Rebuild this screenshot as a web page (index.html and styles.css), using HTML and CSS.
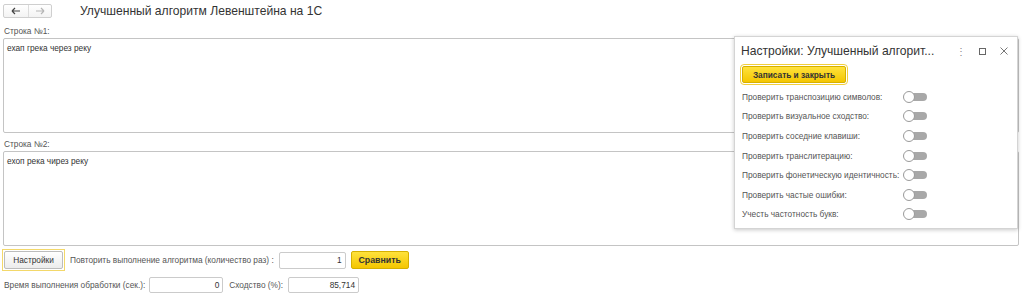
FILE: index.html
```html
<!DOCTYPE html>
<html lang="ru">
<head>
    <meta charset="UTF-8">
    <title>Левенштейн</title>
    <link rel="stylesheet" href="styles.css">
</head>
<body>
    <div class="form">
        <div class="head">
            <div class="nav">
                <span class="nav-btn">
                    <svg width="10" height="8" viewBox="0 0 10 8"><path d="M1 4h8M1 4l3-3M1 4l3 3" fill="none" stroke="#444" stroke-width="1.2"/></svg>
                </span>
                <span class="nav-btn dim">
                    <svg width="10" height="8" viewBox="0 0 10 8"><path d="M1 4h8M9 4l-3-3M9 4l-3 3" fill="none" stroke="#b5b5b5" stroke-width="1.2"/></svg>
                </span>
            </div>
            <div class="title">Улучшенный алгоритм Левенштейна на 1С</div>
        </div>

        <div class="label top">Строка №1:</div>
        <div class="area">ехап грека через реку</div>

        <div class="label top second">Строка №2:</div>
        <div class="area">ехоп река чирез реку</div>

        <div class="row r1">
            <div class="focus"><button class="btn">Настройки</button></div>
            <span class="label">Повторить выполнение алгоритма (количество раз) :</span>
            <div class="field w1">1</div>
            <button class="btn yellow">Сравнить</button>
        </div>
        <div class="row r2">
            <span class="label">Время выполнения обработки (сек.):</span>
            <div class="field w2">0</div>
            <span class="label">Сходство (%):</span>
            <div class="field w3">85,714</div>
        </div>
    </div>

    <!-- окно настроек -->
    <div class="popup">
        <div class="popup-head">
            <div class="popup-title">Настройки: Улучшенный алгорит...</div>
            <span class="ico more">&#8942;</span>
            <span class="ico sq"></span>
            <span class="ico x">
                <svg width="8" height="8" viewBox="0 0 8 8"><path d="M0.5 0.5l7 7M7.5 0.5l-7 7" stroke="#777" stroke-width="1"/></svg>
            </span>
        </div>
        <div class="popup-bar">
            <button class="btn yellow big">Записать и закрыть</button>
        </div>
        <div class="opt"><span>Проверить транспозицию символов:</span><i class="tgl"></i></div>
        <div class="opt"><span>Проверить визуальное сходство:</span><i class="tgl"></i></div>
        <div class="opt"><span>Проверить соседние клавиши:</span><i class="tgl"></i></div>
        <div class="opt"><span>Проверить транслитерацию:</span><i class="tgl"></i></div>
        <div class="opt"><span>Проверить фонетическую идентичность:</span><i class="tgl"></i></div>
        <div class="opt"><span>Проверить частые ошибки:</span><i class="tgl"></i></div>
        <div class="opt"><span>Учесть частотность букв:</span><i class="tgl"></i></div>
    </div>
</body>
</html>
```

FILE: styles.css
```css
body{
    margin: 0;
    background: #fff;
    font-family: "Liberation Sans", Arial, sans-serif;
    font-size: 8.3px;
    color: #555;
}
.form{
    display: flex;
    flex-direction: column;
    padding: 4px 5px 0 3px;
}
.head{
    display: flex;
    align-items: center;
    height: 14px;
}
.nav{
    display: flex;
    box-sizing: border-box;
    border: 1px solid #cfcfcf;
    border-radius: 2px;
    height: 14px;
    width: 49px;
    background: linear-gradient(#fff, #f3f3f3);
}
.nav-btn{
    display: flex;
    align-items: center;
    justify-content: center;
    width: 24px;
}
.nav-btn.dim{
    flex: 1;
    border-left: 1px solid #dcdcdc;
}
.title{
    margin-left: 28px;
    font-size: 12.1px;
    color: #333;
}
.label{
    white-space: nowrap;
}
.label.top{
    height: 10px;
    line-height: 10px;
    margin: 8px 0 2px 1px;
}
.label.top.second{
    margin-top: 6px;
}
.area{
    box-sizing: border-box;
    height: 95px;
    border: 1px solid #c4c4c4;
    border-radius: 2px;
    padding: 4px 3px;
    color: #333;
}
.row{
    display: flex;
    align-items: center;
}
.row.r1{
    margin-top: 3px;
    height: 22px;
}
.row.r2{
    margin-top: 6px;
    padding-left: 1px;
}
.focus{
    border: 1px solid #f3d86a;
    padding: 1px;
    margin-left: -1px;
}
.btn{
    font-family: inherit;
    font-size: 8.3px;
    color: #333;
    background: linear-gradient(#fff, #ececec);
    border: 1px solid #bcbcbc;
    border-radius: 2px;
    height: 18px;
    width: 59px;
    padding: 0;
}
.btn.yellow{
    background: linear-gradient(#ffe23c, #f4c600);
    border-color: #d6b000;
    font-weight: bold;
    color: #333;
}
.r1 .label{
    margin-left: 5px;
}
.r1 .btn.yellow{
    margin-left: 5px;
    width: 58px;
    font-size: 8.8px;
}
.field{
    box-sizing: border-box;
    border: 1px solid #cbcbcb;
    border-radius: 2px;
    height: 16px;
    line-height: 14px;
    text-align: right;
    padding-right: 3px;
    color: #333;
}
.field.w1{
    width: 67px;
    margin-left: 5px;
    height: 17px;
    line-height: 15px;
}
.field.w2{
    width: 74px;
    margin-left: 4px;
    margin-right: 6px;
}
.field.w3{
    width: 71px;
    margin-left: 5px;
}

/* окно настроек */
.popup{
    position: absolute;
    left: 734px;
    top: 36px;
    width: 284px;
    height: 193px;
    box-sizing: border-box;
    background: #fff;
    border: 1px solid #d4d4d4;
    box-shadow: 0 1px 4px rgba(0,0,0,0.22);
    padding: 0 6px;
}
.popup-head{
    display: flex;
    align-items: center;
    height: 28px;
}
.popup-title{
    flex: 1;
    font-size: 12.1px;
    color: #333;
    white-space: nowrap;
}
.ico{
    display: flex;
    align-items: center;
    justify-content: center;
    color: #888;
    font-size: 10px;
}
.ico.more{
    width: 8px;
    margin-right: 14px;
}
.ico.sq{
    width: 5px;
    height: 5px;
    border: 1px solid #666;
    margin-right: 14px;
}
.ico.x{
    width: 8px;
    margin-right: 3px;
}
.popup-bar{
    height: 21px;
    padding-top: 1px;
}
.btn.big{
    width: 104px;
    height: 17px;
    margin-left: 1px;
    outline: 1px solid #f2cf3c;
    outline-offset: 1px;
}
.opt{
    display: flex;
    align-items: center;
    height: 19.6px;
    padding-left: 1px;
}
.opt span{
    width: 162px;
    white-space: nowrap;
}
.tgl{
    position: relative;
    width: 23px;
    height: 8px;
    background: #a8a8a8;
    border-radius: 4px;
}
.tgl::before{
    content: "";
    position: absolute;
    left: -1px;
    top: -2px;
    width: 10px;
    height: 10px;
    border-radius: 50%;
    background: #fff;
    border: 1px solid #9a9a9a;
}
```
